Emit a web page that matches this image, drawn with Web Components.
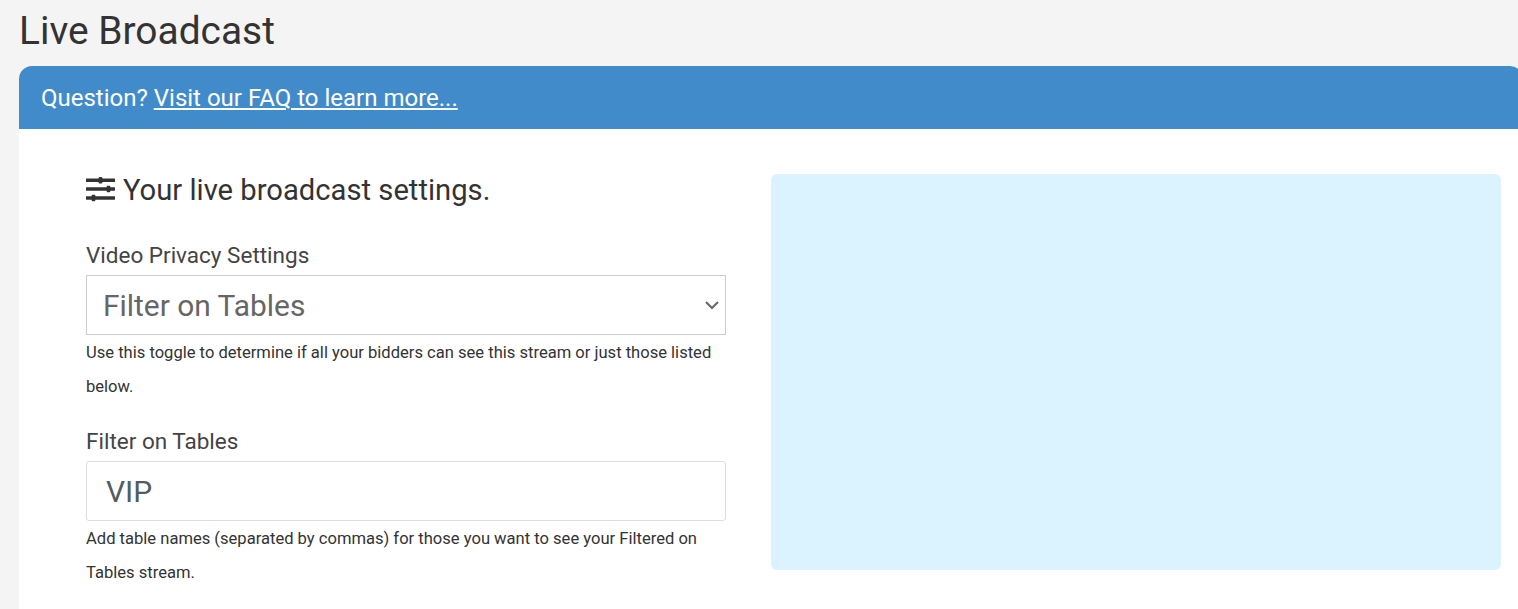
<!DOCTYPE html>
<html lang="en">
<head>
<meta charset="utf-8">
<title>Live Broadcast</title>
<style>
html,body{margin:0;padding:0;height:609px;overflow:hidden;background:#f4f4f4}
body{font-family:Roboto,"Liberation Sans",sans-serif;color:#333}
</style>
</head>
<body>
<template id="t-page">
<style>
:host{display:block;padding:0 0 0 19px;margin-right:-5px}
h1{margin:0;font:400 38.9px/40px Roboto,sans-serif;color:#333;padding:11px 0 15px}
</style>
<h1><slot name="title"></slot></h1>
<slot></slot>
</template>

<template id="t-card">
<style>
:host{display:block;background:#fff;border-radius:13px 13px 0 0;overflow:hidden;height:543px}
header{background:#428bca;color:#fff;height:63px;display:flex;align-items:center;padding:2px 22px 0;box-sizing:border-box;font:400 24px/1.2 Roboto,sans-serif}
.body{display:grid;grid-template-columns:640px 730px;column-gap:45px;padding:45px 0 0 67px;align-items:start}
</style>
<header><slot name="head"></slot></header>
<div class="body"><slot></slot></div>
</template>

<template id="t-heading">
<style>
:host{display:flex;align-items:center;gap:8px;height:32px;font:400 29.2px/32px Roboto,sans-serif;color:#333;margin-bottom:36px}
svg{width:29px;height:26px;display:block;flex:none}
</style>
<svg viewBox="0 0 29 26" aria-hidden="true"><g fill="#333"><rect x="0" y="1.5" width="29" height="3.5" rx=".5"/><rect x="0" y="10.3" width="29" height="3.5" rx=".5"/><rect x="0" y="19.3" width="29" height="3.5" rx=".5"/><rect x="12.6" y="0" width="3.8" height="6.5" rx="1.2"/><rect x="20.6" y="8.8" width="3.8" height="6.5" rx="1.2"/><rect x="5.6" y="17.8" width="3.8" height="6.5" rx="1.2"/></g></svg>
<slot></slot>
</template>

<template id="t-field">
<style>
:host{display:block;margin-bottom:24px}
.lab{display:block;font:400 22.5px/27px Roboto,sans-serif;color:#444;padding-bottom:6px}
.help{display:block;font:400 16.57px/34px Roboto,sans-serif;color:#333;margin-top:1px}
</style>
<span class="lab"><slot name="label"></slot></span>
<slot></slot>
<span class="help"><slot name="help"></slot></span>
</template>

<template id="t-select">
<style>
:host{display:block;position:relative;height:60px;box-sizing:border-box;border:1px solid #ccc;background:#fff}
.v{display:block;padding:1px 16px 0;font:400 29.9px/58px Roboto,sans-serif;color:#666}
svg{position:absolute;right:6px;top:24px;width:14px;height:10px}
</style>
<span class="v"><slot></slot></span>
<svg viewBox="0 0 14 10" aria-hidden="true"><path d="M1 2l6 6 6-6" fill="none" stroke="#666" stroke-width="2"/></svg>
</template>

<template id="t-input">
<style>
:host{display:block;height:60px;box-sizing:border-box;border:1px solid #ddd;border-radius:3px;background:#fff}
.v{display:block;padding:1px 19px 0;font:400 30px/58px Roboto,sans-serif;color:#555c61}
</style>
<span class="v"><slot></slot></span>
</template>

<template id="t-panel">
<style>
:host{display:block;height:396px;background:#dbf3ff;border-radius:6px}
</style>
</template>

<page-shell>
  <span slot="title">Live Broadcast</span>
  <broadcast-card>
    <span slot="head">Question? <a href="#" style="color:#fff;text-decoration:underline">Visit our FAQ to learn more...</a></span>
    <section>
      <settings-heading>Your live broadcast settings.</settings-heading>
      <form-field>
        <span slot="label">Video Privacy Settings</span>
        <fake-select>Filter on Tables</fake-select>
        <span slot="help">Use this toggle to determine if all your bidders can see this stream or just those listed below.</span>
      </form-field>
      <form-field>
        <span slot="label">Filter on Tables</span>
        <fake-input>VIP</fake-input>
        <span slot="help">Add table names (separated by commas) for those you want to see your Filtered on Tables stream.</span>
      </form-field>
    </section>
    <video-panel></video-panel>
  </broadcast-card>
</page-shell>

<script>
const reg=(name,tid)=>customElements.define(name,class extends HTMLElement{
  constructor(){super();this.attachShadow({mode:'open'}).appendChild(document.getElementById(tid).content.cloneNode(true));}
});
reg('page-shell','t-page');
reg('broadcast-card','t-card');
reg('settings-heading','t-heading');
reg('form-field','t-field');
reg('fake-select','t-select');
reg('fake-input','t-input');
reg('video-panel','t-panel');
</script>
</body>
</html>
